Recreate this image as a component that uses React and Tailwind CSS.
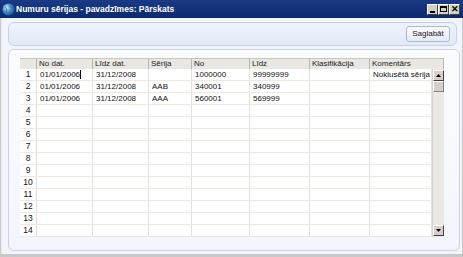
import React from 'react';

const cols = [
  { name: 'No dat.', w: 'w-[56px]' },
  { name: 'Līdz dat.', w: 'w-[56px]' },
  { name: 'Sērija', w: 'w-[43px]' },
  { name: 'No', w: 'w-[58px]' },
  { name: 'Līdz', w: 'w-[60px]' },
  { name: 'Klasifikācija', w: 'w-[60px]' },
  { name: 'Komentārs', w: 'w-[62px]' },
];

const rows = [
  ['01/01/2006', '31/12/2008', '', '1000000', '99999999', '', 'Noklusētā sērija'],
  ['01/01/2006', '31/12/2008', 'AAB', '340001', '340999', '', ''],
  ['01/01/2006', '31/12/2008', 'AAA', '560001', '569999', '', ''],
];

const Globe = () => (
  <svg width="13" height="13" viewBox="0 0 13 13">
    <defs>
      <radialGradient id="g" cx="35%" cy="35%" r="70%">
        <stop offset="0" stopColor="#d8ecff" />
        <stop offset="0.5" stopColor="#4a90d8" />
        <stop offset="1" stopColor="#1a4f9a" />
      </radialGradient>
    </defs>
    <circle cx="6.5" cy="6.5" r="6" fill="url(#g)" />
    <path d="M3 4c2 1 2 3 1 5M8 2c-1 2 1 3 3 3M7 9c1 0 2 1 2 3" stroke="#2f7a3a" strokeWidth="1.2" fill="none" opacity="0.6" />
  </svg>
);

const WinBtn = ({ children }) => (
  <div className="w-[11px] h-[11px] bg-[#d4d0c8] border-t border-l border-t-white border-l-white border-b border-r border-b-[#404040] border-r-[#404040] flex items-center justify-center">
    {children}
  </div>
);

const ScrollArrow = ({ up }) => (
  <div className="w-[11px] h-[11px] bg-[#d4d0c8] border-t border-l border-t-white border-l-white border-b border-r border-b-[#404040] border-r-[#404040] flex items-center justify-center">
    <svg width="5" height="3" viewBox="0 0 5 3">
      {up ? <path d="M0 3h5L2.5 0z" fill="#000" /> : <path d="M0 0h5L2.5 3z" fill="#000" />}
    </svg>
  </div>
);

export default function App() {
  const body = Array.from({ length: 14 }, (_, i) => rows[i] || ['', '', '', '', '', '', '']);
  return (
    <div className="w-[463px] h-[257px] flex flex-col bg-[#c8c8c8] font-['Liberation_Sans',Arial,sans-serif] overflow-hidden">
      <div className="h-[18px] shrink-0 bg-gradient-to-b from-[#1a3a86] to-[#0c2a6c] flex items-center pl-[2px] pr-[3px]">
        <Globe />
        <span className="ml-[1px] text-white font-bold text-[8.5px] leading-none">Numuru sērijas - pavadzīmes: Pārskats</span>
        <div className="ml-auto flex">
          <WinBtn>
            <div className="w-[5px] h-[2px] bg-black mt-[5px] -ml-[1px]" />
          </WinBtn>
          <WinBtn>
            <div className="w-[7px] h-[6px] border border-black border-t-2" />
          </WinBtn>
          <WinBtn>
            <span className="text-[9px] font-bold leading-none text-black">✕</span>
          </WinBtn>
        </div>
      </div>

      <div className="flex-1 flex flex-col ml-[1px] mr-[1px] mb-[3px] bg-[#f1f4fa] border-l border-[#e8ecf3] pl-[6px] pr-[2px] pt-[4px]">
        <div className="h-[24px] mr-[3px] rounded-[6px] border border-[#c3d2ea] bg-gradient-to-b from-[#eef3fb] to-[#e2eaf7] flex items-center justify-end pr-[6px]">
          <div className="h-[16px] w-[44px] rounded-[3px] border border-[#a9b9d2] bg-gradient-to-b from-[#fbfcfe] to-[#e4eaf4] flex items-center justify-center text-[8px] text-[#1a1a1a]">
            Saglabāt
          </div>
        </div>

        <div className="mt-[3px] h-[202px] rounded-[6px] border border-[#c6d3e8] bg-gradient-to-b from-[#fbfcfe] to-[#f2f6fc] pl-[11px] pt-[8px]">
          <div className="w-[424px] text-[8px] text-[#111] leading-none">
            <div className="flex h-[11px] bg-[#e9e7e2] border-t border-[#c9c6be]">
              <div className="w-[17px] border-r border-[#b9b6ae]" />
              {cols.map((c, i) => (
                <div
                  key={c.name}
                  className={`${i === cols.length - 1 ? 'w-[74px]' : c.w} border-r border-[#b9b6ae] pl-[2px] flex items-center text-[#222]`}
                >
                  {c.name}
                </div>
              ))}
            </div>
            <div className="flex">
              <div className="flex flex-col bg-white">
                {body.map((r, i) => (
                  <div key={i} className="flex h-[12px] border-b border-[#ece9e2]">
                    <div className="w-[17px] border-r border-[#e0ddd5] flex items-center justify-center text-[8.5px]">
                      {i + 1}
                    </div>
                    {r.map((v, j) => (
                      <div
                        key={j}
                        className={`${cols[j].w} border-r border-[#e6e3dc] flex items-center pl-[3px] whitespace-nowrap`}
                      >
                        {v}
                        {i === 0 && j === 0 && <span className="w-[1px] h-[9px] bg-black" />}
                      </div>
                    ))}
                  </div>
                ))}
              </div>
              <div className="w-[12px] h-[168px] bg-[#e9e8e3] border-l border-[#d6d3cb] flex flex-col pt-[1px] pb-[1px]">
                <ScrollArrow up />
                <div className="w-[11px] h-[11px] bg-[#d4d0c8] border-t border-l border-t-white border-l-white border-b border-r border-b-[#808080] border-r-[#808080]" />
                <div className="flex-1" />
                <ScrollArrow />
              </div>
            </div>
          </div>
        </div>
      </div>
    </div>
  );
}
